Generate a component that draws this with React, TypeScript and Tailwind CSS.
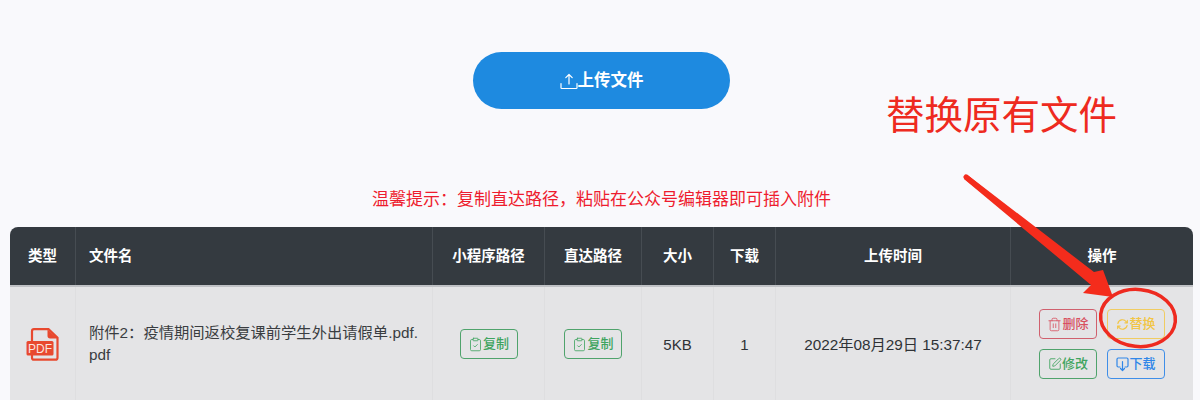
import { ClipboardCheck, Trash2, SquarePen } from "lucide-react";

// 上传文件 tray + arrow
function UploadIcon() {
  return (
    <svg width="18" height="18" viewBox="0 0 18 18" fill="none" stroke="currentColor" strokeWidth="1.2" strokeLinecap="round" strokeLinejoin="round">
      <path d="M9 12V2.5M5.8 5.6 9 2.5l3.2 3.1" />
      <path d="M1 11.5v4.2c0 .5.3.8.8.8h14.4c.5 0 .8-.3.8-.8v-4.2" />
    </svg>
  );
}

function ReplaceIcon() {
  return (
    <svg width="13" height="13" viewBox="0 0 14 14" fill="none" stroke="currentColor" strokeWidth="1.2" strokeLinecap="round" strokeLinejoin="round">
      <path d="M2 6a5 5 0 0 1 9-2l1 1M12 8a5 5 0 0 1-9 2L2 9" />
      <path d="M12.2 2.6v2.6H9.6M1.8 11.4V8.8h2.6" />
    </svg>
  );
}

function DownloadIcon() {
  return (
    <svg width="13" height="15" viewBox="0 0 13 15" fill="none" stroke="currentColor" strokeWidth="1.2" strokeLinecap="round" strokeLinejoin="round">
      <path d="M4 10H2.2C1.5 10 1 9.5 1 8.800V2.200C1 1.500 1.500 1 2.200 1h8.600c.7 0 1.200.5 1.200 1.200v6.600c0 .7-.5 1.200-1.200 1.200H9" />
      <path d="M6.500 4.500v9M4.500 11.500l2 2 2-2" />
    </svg>
  );
}

function PdfIcon() {
  return (
    <svg width="33" height="33" viewBox="0 0 33 33">
      <path d="M6 13V3.2C6 2 7 1.2 8 1.2h14.5l9 8.5v20c0 1.2-1 2-2 2H8c-1 0-2-.8-2-2v-3" fill="none" stroke="#e8492f" strokeWidth="2.2" />
      <path d="M21.5 1.5V8c0 1.5 1 2.5 2.5 2.5h7.500z" fill="#e8492f" />
      <rect x="0.5" y="13" width="27" height="14.5" rx="1.5" fill="#e8492f" />
      <text x="14" y="25" textAnchor="middle" fontSize="12" fill="#fbe4df" fontFamily="Liberation Sans, sans-serif">
        PDF
      </text>
    </svg>
  );
}

function CopyButton() {
  return (
    <button className="flex h-[30px] w-[58px] items-center justify-center rounded-[4px] border-[1.5px] border-[#4fa36c] text-[13px] font-medium text-[#3fa45f]">
      <ClipboardCheck size={15} strokeWidth={1.3} />
      复制
    </button>
  );
}

const headers = [
  { label: "类型", align: "justify-center" },
  { label: "文件名", align: "justify-start pl-[13px]" },
  { label: "小程序路径", align: "justify-center" },
  { label: "直达路径", align: "justify-center" },
  { label: "大小", align: "justify-center" },
  { label: "下载", align: "justify-center" },
  { label: "上传时间", align: "justify-center" },
  { label: "操作", align: "justify-center" },
];

export default function App() {
  return (
    <div className="relative h-[400px] w-[1200px] overflow-hidden bg-[#f9f9fc] font-['Liberation_Sans','Noto_Sans_CJK_SC',sans-serif]">
      <div className="flex justify-center pl-[3px] pt-[52px]">
        <button className="flex h-[57px] w-[257px] items-center justify-center rounded-full bg-[#1e8ae0] text-[16.5px] font-bold text-white">
          <UploadIcon />
          上传文件
        </button>
      </div>

      <p className="mt-[80px] pl-[3px] text-center text-[17px] leading-[22px] text-[#ee1c2e]">
        温馨提示：复制直达路径，粘贴在公众号编辑器即可插入附件
      </p>

      <div className="mx-[10px] mt-[16px] w-[1183px] overflow-hidden rounded-t-[8px]">
        {/* Header */}
        <div className="grid h-[60px] grid-cols-[66px_357px_112px_97px_72px_62px_235px_182px] border-b-[2px] border-[#bfc1c5] bg-[#343a40] text-[14.5px] font-bold text-white">
          {headers.map((h) => (
            <div key={h.label} className={`flex items-center border-r border-[#464c52] pt-[1px] last:border-r-0 ${h.align}`}>
              {h.label}
            </div>
          ))}
        </div>

        {/* Row */}
        <div className="grid h-[113px] grid-cols-[66px_357px_112px_97px_72px_62px_235px_182px] bg-[#e4e4e6] text-[14px] text-[#2f3236]">
          <div className="flex items-start justify-center border-r border-[#dedee0] pt-[41px]">
            <PdfIcon />
          </div>
          <div className="border-r border-[#dedee0] pl-[13px] pt-[35px] text-[15.3px] leading-[22px] whitespace-nowrap text-[#3a3d41]">
            附件2：疫情期间返校复课前学生外出请假单.pdf.
            <br />
            pdf
          </div>
          <div className="flex items-start justify-center border-r border-[#dedee0] pt-[42px]">
            <CopyButton />
          </div>
          <div className="flex items-start justify-center border-r border-[#dedee0] pt-[42px]">
            <CopyButton />
          </div>
          <div className="flex items-start justify-center border-r border-[#dedee0] pt-[47px] text-[15px]">5KB</div>
          <div className="flex items-start justify-center border-r border-[#dedee0] pt-[47px] text-[15px]">1</div>
          <div className="flex items-start justify-center border-r border-[#dedee0] pt-[47px] text-[15.3px]">2022年08月29日 15:37:47</div>
          <div className="grid grid-cols-[58px_58px] content-start justify-center gap-x-[10px] gap-y-[10px] pt-[22px]">
            <button className="flex h-[30px] items-center justify-center rounded-[4px] border-[1.5px] border-[#d0606e] text-[13px] font-medium text-[#d8505f]">
              <Trash2 size={15} strokeWidth={1.3} />
              删除
            </button>
            <button className="flex h-[30px] items-center justify-center rounded-[4px] border-[1.5px] border-[#f0cc62] text-[13px] font-medium text-[#f2c544]">
              <ReplaceIcon />
              替换
            </button>
            <button className="flex h-[30px] items-center justify-center rounded-[4px] border-[1.5px] border-[#4fa36c] text-[13px] font-medium text-[#3fa45f]">
              <SquarePen size={14} strokeWidth={1.5} />
              修改
            </button>
            <button className="flex h-[30px] items-center justify-center rounded-[4px] border-[1.5px] border-[#3f8ee8] text-[13px] font-medium text-[#2f86e8]">
              <DownloadIcon />
              下载
            </button>
          </div>
        </div>
      </div>

      {/* Hand-drawn annotation over the page */}
      <div className="absolute left-[886px] top-[91px] text-[38.5px] leading-[50px] whitespace-nowrap text-[#ee2a20]">替换原有文件</div>
      <svg className="absolute left-0 top-0" width="1200" height="400" fill="none">
        <path d="M966 177 1100 285" stroke="#f42c1c" strokeWidth="5" strokeLinecap="round" />
        <path d="M967 174.5 1094 272 1103 270 1113 297 1083 293 1091 285 964 179z" fill="#f42c1c" />
        <ellipse cx="1138" cy="318" rx="37.500" ry="28.500" transform="rotate(6 1138 318)" stroke="#ee2a20" strokeWidth="3.500" />
      </svg>
    </div>
  );
}
